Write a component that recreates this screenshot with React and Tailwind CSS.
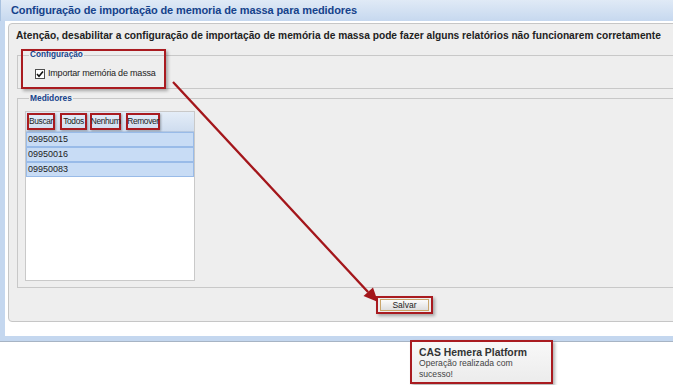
import React from "react";

const medidores = ["09950015", "09950016", "09950083"];
const tools = [
  { label: "Buscar", w: "w-[28px]", ml: "ml-[1px]" },
  { label: "Todos", w: "w-[27px]", ml: "ml-[5px]" },
  { label: "Nenhum", w: "w-[31px]", ml: "ml-[3px]" },
  { label: "Remover", w: "w-[34px]", ml: "ml-[5px]" },
];

function Checkbox() {
  return (
    <span className="flex h-[10px] w-[10px] items-center justify-center border border-[#4d4d4d] bg-white">
      <svg width="8" height="8" viewBox="0 0 8 8">
        <path d="M1 4 L3 6.2 L7 1.5" fill="none" stroke="#111" strokeWidth="1.6" />
      </svg>
    </span>
  );
}

function Arrow() {
  return (
    <svg className="pointer-events-none absolute left-0 top-0" width="673" height="385">
      <line x1="174" y1="83" x2="369" y2="293" stroke="#d9a0a0" strokeWidth="2" transform="translate(1,1)" />
      <line x1="173" y1="82" x2="368" y2="292" stroke="#a3161b" strokeWidth="2.2" />
      <polygon points="378,302 363.5,296 373,287.5" fill="#a3161b" />
    </svg>
  );
}

export default function App() {
  return (
    <div className="relative h-[385px] w-[673px] overflow-hidden bg-white font-['Liberation_Sans',Arial,sans-serif]">
      <div className="w-[700px]">
        <div className="flex h-[21px] items-center border-l border-[#a9c2e0] bg-gradient-to-b from-[#e0eaf6] to-[#c6d8ef] pl-[10px] text-[11px] font-bold tracking-[-0.1px] text-[#15428b]">
          Configuração de importação de memoria de massa para medidores
        </div>
        <div className="border-b-[5px] border-l-[5px] border-[#c4d7ef] bg-white pb-[14px] pl-[3px] pt-[2px]">
          <div className="flex h-[299px] flex-col rounded-[4px] border border-[#c6c6c6] bg-[#eeeeee] pl-[7px]">
            <div className="whitespace-nowrap pt-[6px] text-[10.2px] font-bold leading-[12px] text-[#222]">
              Atenção, desabilitar a configuração de importação de memória de massa pode fazer alguns relatórios não funcionarem corretamente
            </div>

            <fieldset className="ml-px mt-[8px] h-[39px] border border-[#c8c8c8] pl-[11px]">
              <legend className="px-[1px] text-[8.2px] font-bold leading-[10px] text-[#15428b]">Configuração</legend>
              <label className="ml-[6px] mt-[8px] flex h-[11px] items-center gap-[3px] text-[9px] tracking-[-0.2px] text-[#222]">
                <Checkbox />
                Importar memória de massa
              </label>
            </fieldset>

            <fieldset className="ml-px mt-[4px] border border-[#c8c8c8] pb-[6px] pl-[7px] pt-[8px]">
              <legend className="ml-[4px] px-[1px] text-[8.4px] font-bold leading-[10px] text-[#15428b]">Medidores</legend>
              <div className="flex h-[170px] w-[170px] flex-col border border-[#c9c9c9] bg-white">
                <div className="flex h-[20px] shrink-0 items-center border-b border-[#b5c8e1] bg-gradient-to-b from-[#e4edf8] to-[#cfddef]">
                  {tools.map((t) => (
                    <span
                      key={t.label}
                      className={`${t.ml} ${t.w} flex h-[17px] items-center justify-center overflow-visible whitespace-nowrap border-2 border-[#a91b20] text-[8.4px] tracking-[-0.35px] text-[#222] shadow-[1px_1px_2px_rgba(0,0,0,0.3)]`}
                    >
                      {t.label}
                    </span>
                  ))}
                </div>
                {medidores.map((m) => (
                  <div
                    key={m}
                    className="flex h-[15px] shrink-0 items-center border border-[#99bbe8] bg-[#c8dcf5] pl-[1px] text-[9px] text-[#222]"
                  >
                    {m}
                  </div>
                ))}
              </div>
            </fieldset>

            <div className="flex flex-1 items-center pl-[360px]">
              <div className="flex h-[18px] w-[57px] items-center justify-center border-2 border-[#a91b20] shadow-[2px_2px_3px_rgba(0,0,0,0.3)]">
                <button className="h-[12px] w-[49px] border border-[#c9a56a] bg-gradient-to-b from-[#fbfbfb] to-[#dedede] text-[8.5px] leading-[10px] text-[#222]">
                  Salvar
                </button>
              </div>
            </div>
          </div>
        </div>
        <div className="h-px bg-[#a7b4c4]" />
      </div>

      <div className="absolute left-[21px] top-[49px] h-[40px] w-[145px] border-2 border-[#a91b20] shadow-[2px_2px_3px_rgba(0,0,0,0.3)]" />

      <Arrow />

      <div className="absolute left-[410px] top-[340px] h-[44px] w-[143px] border-2 border-[#a91b20] bg-gradient-to-b from-[#f8f8f8] to-[#ececec] pl-[7px] pt-[5px] shadow-[2px_2px_3px_rgba(0,0,0,0.3)]">
        <div className="text-[10.4px] font-bold leading-[11px] text-[#333]">CAS Hemera Platform</div>
        <div className="w-[100px] text-[8.6px] leading-[11px] text-[#444]">Operação realizada com sucesso!</div>
      </div>
    </div>
  );
}
